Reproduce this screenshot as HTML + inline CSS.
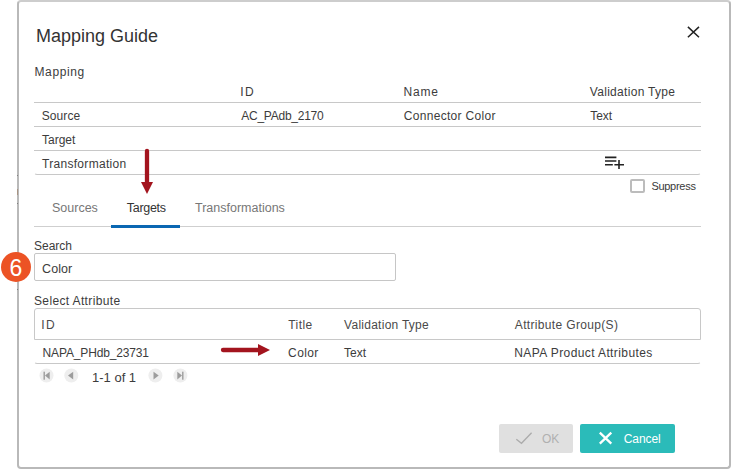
<!DOCTYPE html>
<html><head><meta charset="utf-8">
<style>
html,body{margin:0;padding:0;width:731px;height:469px;overflow:hidden;background:#fff;}
body{position:relative;font-family:"Liberation Sans",sans-serif;color:#3c3c3c;}
.t{position:absolute;white-space:nowrap;line-height:1;}
.f12{font-size:12px;}
.dlg{position:absolute;left:17px;top:0;width:714px;height:469px;box-sizing:border-box;border:2px solid #b9b9b9;border-top-color:#cdcdcd;border-radius:4px;background:#fff;}
.hl{position:absolute;height:1px;background:#c8c8c8;}
svg{position:absolute;overflow:visible;}
</style></head><body>
<div class="dlg"></div>
<div style="position:absolute;left:17px;top:175px;width:1px;height:1px;background:#808080;"></div>
<div style="position:absolute;left:17px;top:203px;width:1px;height:1px;background:#808080;"></div>
<div style="position:absolute;left:17px;top:189px;width:1px;height:6px;background:#a89484;"></div>
<div style="position:absolute;left:17px;top:289px;width:1px;height:1px;background:#808080;"></div>

<!-- title -->
<div class="t" style="left:36px;top:27px;font-size:18px;color:#333;">Mapping Guide</div>
<svg style="left:687px;top:26px" width="13" height="13" viewBox="0 0 13 13"><path d="M0.9 0.9L12 11.3M12 0.9L0.9 11.3" stroke="#222" stroke-width="1.5" fill="none"/></svg>

<div class="t f12" style="left:34.5px;top:66px;letter-spacing:0.62px;">Mapping</div>

<!-- mapping table -->
<div class="t f12" style="left:240.3px;top:86px;letter-spacing:1.3px;">ID</div>
<div class="t f12" style="left:403.5px;top:86px;letter-spacing:0.8px;">Name</div>
<div class="t f12" style="left:589.8px;top:86px;letter-spacing:0.3px;">Validation Type</div>
<div class="hl" style="left:34px;top:102px;width:667px;"></div>
<div class="t f12" style="left:41.7px;top:110px;letter-spacing:0.1px;">Source</div>
<div class="t f12" style="left:241.2px;top:110px;letter-spacing:-0.24px;">AC_PAdb_2170</div>
<div class="t f12" style="left:403.8px;top:110px;letter-spacing:0.3px;">Connector Color</div>
<div class="t f12" style="left:590.2px;top:110px;">Text</div>
<div class="hl" style="left:34px;top:126px;width:667px;"></div>
<div class="t f12" style="left:42px;top:134px;">Target</div>
<div class="hl" style="left:34px;top:150px;width:667px;"></div>
<div class="t f12" style="left:42px;top:158px;letter-spacing:0.3px;">Transformation</div>
<div style="position:absolute;left:34px;top:171px;width:667px;height:4px;box-sizing:border-box;border-bottom:1px solid #c8c8c8;border-radius:0 0 3px 3px;border-left:1px solid transparent;border-right:1px solid transparent;"></div>
<svg style="left:604px;top:155px" width="22" height="16" viewBox="0 0 22 16">
<path d="M1 2.4H12.4M1 6H12.4M1 9.8H8.8M10.4 9.8H20M15 5V14" stroke="#222" stroke-width="1.6" fill="none"/></svg>

<div style="position:absolute;left:630px;top:179px;width:15px;height:14px;box-sizing:border-box;border:2px solid #bcbcbc;border-radius:2px;"></div>
<div class="t" style="left:651.4px;top:181px;font-size:11px;color:#3a3a3a;letter-spacing:-0.28px;">Suppress</div>

<!-- tabs -->
<div class="t" style="left:52px;top:202px;font-size:12.5px;color:#777;">Sources</div>
<div class="t" style="left:126.8px;top:202px;font-size:12.5px;color:#333;letter-spacing:-0.3px;">Targets</div>
<div class="t" style="left:195px;top:202px;font-size:12.5px;color:#777;">Transformations</div>
<div class="hl" style="left:34px;top:226px;width:667px;background:#cfcfcf;"></div>
<div style="position:absolute;left:111px;top:225px;width:69px;height:3px;background:#0a67b2;"></div>

<!-- vertical red arrow -->
<svg style="left:140px;top:148px" width="14" height="47" viewBox="0 0 14 47">
<path d="M7 3V36" stroke="#a3141e" stroke-width="4.3" stroke-linecap="round" fill="none"/>
<path d="M1 34H13L7 46Z" fill="#a3141e"/></svg>

<!-- search -->
<div class="t f12" style="left:34px;top:240px;">Search</div>
<div style="position:absolute;left:34px;top:253px;width:362px;height:28px;box-sizing:border-box;border:1px solid #c6c6c6;border-radius:2px;"></div>
<div class="t" style="left:42px;top:263px;font-size:12.5px;letter-spacing:0.1px;">Color</div>

<!-- step badge -->
<div style="position:absolute;left:0.7px;top:251.6px;width:30.6px;height:30.6px;border-radius:50%;background:#ec5325;"></div>
<div class="t" style="left:7px;top:256.5px;font-size:23px;color:#fff;width:18px;text-align:center;">6</div>

<div class="t f12" style="left:34px;top:295px;letter-spacing:0.36px;">Select Attribute</div>

<!-- attribute table -->
<div style="position:absolute;left:34px;top:308px;width:667px;height:32px;box-sizing:border-box;border:1px solid #c8c8c8;border-radius:3px 3px 0 0;"></div>
<div class="t f12" style="left:41.2px;top:319px;color:#4a4a4a;letter-spacing:1.6px;">ID</div>
<div class="t f12" style="left:288.3px;top:319px;color:#4a4a4a;letter-spacing:0.42px;">Title</div>
<div class="t f12" style="left:344.1px;top:319px;color:#4a4a4a;letter-spacing:0.26px;">Validation Type</div>
<div class="t f12" style="left:514.8px;top:319px;color:#4a4a4a;letter-spacing:0.34px;">Attribute Group(S)</div>
<div class="t f12" style="left:42.6px;top:347px;letter-spacing:-0.15px;">NAPA_PHdb_23731</div>
<div class="t f12" style="left:288.1px;top:347px;letter-spacing:0.37px;">Color</div>
<div class="t f12" style="left:344px;top:347px;">Text</div>
<div class="t f12" style="left:514.3px;top:347px;letter-spacing:0.4px;">NAPA Product Attributes</div>
<div style="position:absolute;left:34px;top:359px;width:667px;height:5px;box-sizing:border-box;border-bottom:1px solid #c8c8c8;border-radius:0 0 3px 3px;border-left:1px solid transparent;border-right:1px solid transparent;"></div>

<!-- horizontal red arrow -->
<svg style="left:219px;top:343px" width="52" height="14" viewBox="0 0 52 14">
<path d="M4 7H41" stroke="#a3141e" stroke-width="4.3" stroke-linecap="round" fill="none"/>
<path d="M39 1V13L51 7Z" fill="#a3141e"/></svg>

<!-- pager -->
<svg style="left:39px;top:368px" width="150" height="15" viewBox="0 0 150 15">
<circle cx="7.5" cy="7.5" r="7" fill="#eeeeee"/>
<rect x="4.5" y="3.7" width="1.4" height="8" fill="#9c9c9c"/><path d="M6 7.6L10.7 3.7V11.6Z" fill="#9c9c9c"/>
<circle cx="32.3" cy="7.5" r="7" fill="#eeeeee"/>
<path d="M29 7.6L34.2 3.7V11.6Z" fill="#9c9c9c"/>
<circle cx="116.4" cy="7.5" r="7" fill="#eeeeee"/>
<path d="M119.7 7.6L114.5 3.7V11.6Z" fill="#9c9c9c"/>
<circle cx="141.4" cy="7.5" r="7" fill="#eeeeee"/>
<rect x="143.1" y="3.7" width="1.4" height="8" fill="#9c9c9c"/><path d="M143 7.6L138.3 3.7V11.6Z" fill="#9c9c9c"/>
</svg>
<div class="t" style="left:92px;top:371px;font-size:13px;">1-1 of 1</div>

<!-- buttons -->
<div style="position:absolute;left:499px;top:424px;width:74px;height:29px;background:#e0e0e0;border-radius:2px;"></div>
<svg style="left:515px;top:432px" width="18" height="13" viewBox="0 0 18 13"><path d="M1.3 7.2L6.5 11.3L16.6 0.8" stroke="#acacac" stroke-width="1.35" fill="none"/></svg>
<div class="t f12" style="left:542px;top:433px;color:#b0b0b0;">OK</div>
<div style="position:absolute;left:580px;top:424px;width:95px;height:29px;background:#2bbbb9;border-radius:2px;"></div>
<svg style="left:598px;top:431px" width="15" height="14" viewBox="0 0 15 14"><path d="M1.8 1.6L13.3 12.7M13.3 1.6L1.8 12.7" stroke="#fff" stroke-width="2.3" fill="none"/></svg>
<div class="t f12" style="left:623.8px;top:433px;color:#fff;letter-spacing:-0.1px;">Cancel</div>
</body></html>
